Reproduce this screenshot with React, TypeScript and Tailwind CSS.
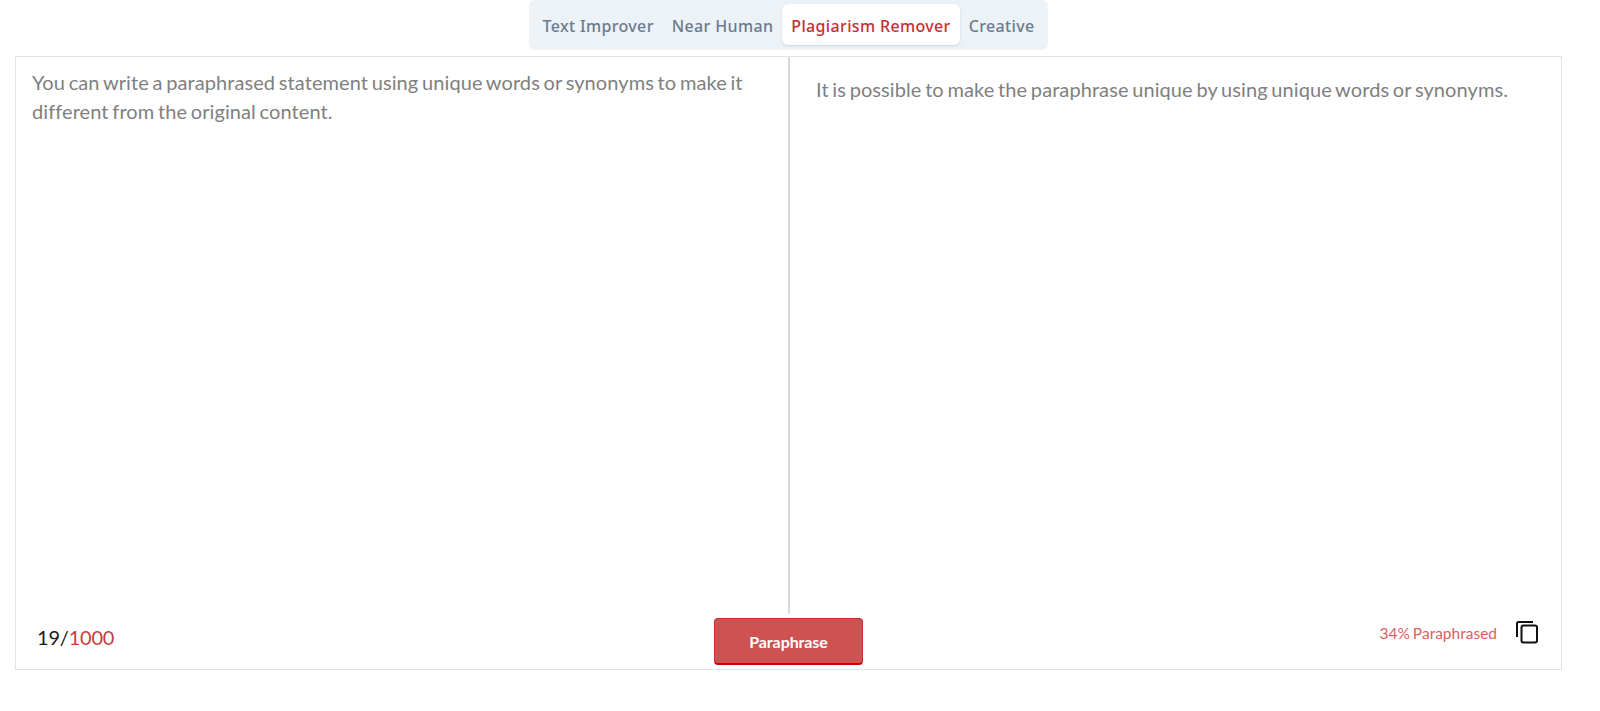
const tabs = ['Text Improver', 'Near Human', 'Plagiarism Remover', 'Creative'];
const activeTab = 'Plagiarism Remover';

const CopyIcon = () => (
  <svg className="mb-[4px]" width="24" height="24" viewBox="0 0 24 24" fill="none" stroke="#111111" strokeWidth="2">
    <path d="M2 17V3.5C2 2.5 2.5 2 3.5 2H18" />
    <rect x="6.5" y="5.5" width="15.5" height="17" rx="2" />
  </svg>
);

export default function App() {
  return (
    <div className="min-h-screen bg-white font-['Lato','Liberation_Sans',sans-serif]">
      {/* Mode tabs */}
      <div className="ml-[15px] flex w-[1547px] justify-center">
        <div className="flex h-[50px] items-start rounded-md bg-[#edf2f7] px-1 pt-1 font-['Noto_Sans',sans-serif] text-[16px] font-medium tracking-[0.35px] text-[#6b7a90]">
          {tabs.map((tab) => (
            <div
              key={tab}
              className={
                tab === activeTab
                  ? 'flex h-[41px] items-center rounded-md bg-white px-[9px] pt-[3px] text-[#c53030] shadow-sm'
                  : 'flex h-[41px] items-center px-[9px] pt-[3px]'
              }
            >
              {tab}
            </div>
          ))}
        </div>
      </div>

      {/* Editor */}
      <div className="mx-[15px] mt-[6px] flex h-[614px] w-[1547px] flex-col border border-[#e2e2e2]">
        <div className="flex h-[557px]">
          <div className="w-[774px] border-r-2 border-[#d9d9d9] pt-[11px] pl-4 pr-4 text-[20px] leading-[29px] tracking-[0.08px] [word-spacing:-1.5px] text-[#808080]">
            You can write a paraphrased statement using unique words or synonyms to make it different from the original content.
          </div>
          <div className="flex-1 pt-[18px] pl-[26px] pr-4 text-[20px] leading-[29px] tracking-[0.08px] [word-spacing:-1.5px] text-[#808080]">
            It is possible to make the paraphrase unique by using unique words or synonyms.
          </div>
        </div>
        <div className="grid flex-1 grid-cols-3 items-start">
          <div className="pt-[8px] pl-[21px] text-[20px] tracking-[-0.2px] text-[#1a1a1a]">
            19/<span className="text-[#c53f3f]">1000</span>
          </div>
          <div className="flex justify-center">
            <button className="mt-1 h-[47px] w-[149px] rounded border border-b-2 border-[#c53030] border-b-[#cc0000] bg-[#cd5252] pt-[2px] text-[16px] font-bold tracking-[-0.1px] text-white">
              Paraphrase
            </button>
          </div>
          <div className="flex items-center justify-end gap-[18px] pt-[6px] pr-[22px] text-[15.5px] [word-spacing:-1px] text-[#d9605f]">
            34% Paraphrased
            <CopyIcon />
          </div>
        </div>
      </div>
    </div>
  );
}
